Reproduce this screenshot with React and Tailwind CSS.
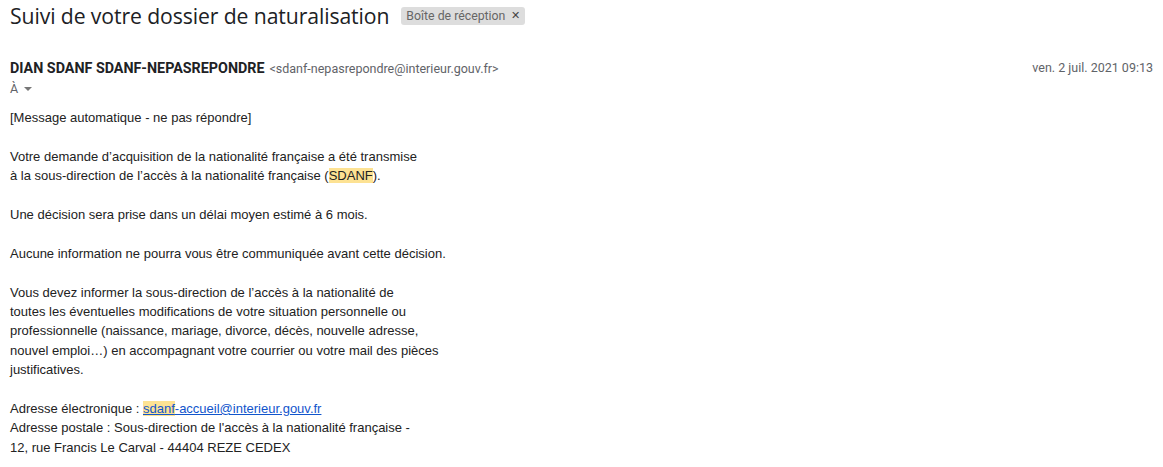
export default function App() {
  const body = "font-['Liberation_Sans',Arial,sans-serif] text-[13px] leading-[19.4px] text-[#222222]";
  return (
    <div className="w-[1163px] h-[467px] bg-white overflow-hidden">
      <div className="flex items-center pl-[10px] pt-[4px] h-[28px]">
        <h1 className="font-['Open_Sans',sans-serif] text-[21.2px] text-[#202124] font-normal leading-[28px] tracking-[-0.1px]">
          Suivi de votre dossier de naturalisation
        </h1>
        <span className="ml-[12px] flex items-center h-[18px] px-[5px] rounded-[3px] bg-[#dddddd] text-[#666666] font-['Roboto',sans-serif] text-[12.3px] leading-[18px]">
          Boîte de réception
          <span className="ml-[6px] text-[11px] text-[#444]">✕</span>
        </span>
      </div>
      <div className="flex items-start justify-between pl-[10px] pr-[10px] mt-[30px]">
        <div className="flex items-baseline">
          <span className="font-['Roboto',sans-serif] font-bold text-[14.3px] text-[#202124] leading-[20px]">
            DIAN SDANF SDANF-NEPASREPONDRE
          </span>
          <span className="ml-[5px] font-['Roboto',sans-serif] text-[12.5px] text-[#5f6368] leading-[20px]">
            &lt;sdanf-nepasrepondre@interieur.gouv.fr&gt;
          </span>
        </div>
        <span className="font-['Roboto',sans-serif] text-[12.5px] text-[#5f6368] leading-[20px]">
          ven. 2 juil. 2021 09:13
        </span>
      </div>
      <div className="flex items-center pl-[10px] h-[20px] font-['Roboto',sans-serif] text-[12.5px] text-[#5f6368]">
        <span>À</span>
        <svg width="10" height="6" viewBox="0 0 10 6" className="ml-[5px]">
          <path d="M1 1 L5 5 L9 1 Z" fill="#777" />
        </svg>
      </div>
      <div className={`${body} pl-[10px] mt-[9px]`}>
        <p>[Message automatique - ne pas répondre]</p>
        <p className="mt-[19.4px]">
          Votre demande d’acquisition de la nationalité française a été transmise
          <br />
          à la sous-direction de l’accès à la nationalité française (
          <span className="bg-[#fde293]">SDANF</span>).
        </p>
        <p className="mt-[19.4px]">Une décision sera prise dans un délai moyen estimé à 6 mois.</p>
        <p className="mt-[19.4px]">Aucune information ne pourra vous être communiquée avant cette décision.</p>
        <p className="mt-[19.4px]">
          Vous devez informer la sous-direction de l’accès à la nationalité de
          <br />
          toutes les éventuelles modifications de votre situation personnelle ou
          <br />
          professionnelle (naissance, mariage, divorce, décès, nouvelle adresse,
          <br />
          nouvel emploi…) en accompagnant votre courrier ou votre mail des pièces
          <br />
          justificatives.
        </p>
        <p className="mt-[19.4px]">
          Adresse électronique :{" "}
          <a className="text-[#1155cc] underline">
            <span className="bg-[#fde293]">sdanf</span>-accueil@interieur.gouv.fr
          </a>
          <br />
          Adresse postale : Sous-direction de l'accès à la nationalité française -
          <br />
          12, rue Francis Le Carval - 44404 REZE CEDEX
        </p>
      </div>
    </div>
  );
}
